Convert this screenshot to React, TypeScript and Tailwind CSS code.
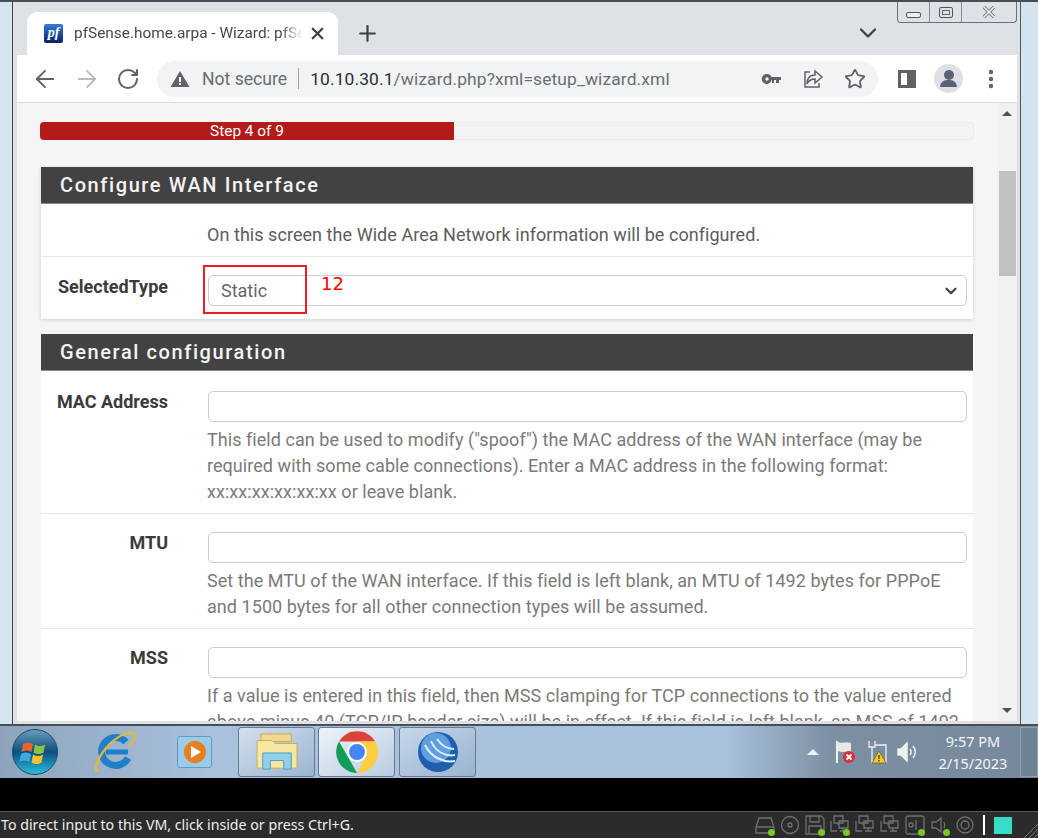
import React from "react";
import { ArrowLeft, ArrowRight, RotateCw, Plus, X, ChevronDown, Star, EllipsisVertical } from "lucide-react";

const Field: React.FC<{ label: string; labelClass: string; inputClass: string; lines: string[]; rowClass: string }> = ({
  label,
  labelClass,
  inputClass,
  lines,
  rowClass,
}) => (
  <div className={`flex border-b border-[#e6e6e6] ${rowClass}`}>
    <div className={`w-[127px] shrink-0 text-right font-bold text-[18px] leading-[24px] text-[#3a3a3a] ${labelClass}`}>
      {label}
    </div>
    <div className={`ml-[40px] w-[759px] ${inputClass}`}>
      <div className="h-[31px] rounded-[5px] border border-[#ccc] bg-white" />
      <div className="-ml-px mt-[5px] text-[18px] tracking-[0.05px] leading-[26px] text-[#7a7a7a]">
        {lines.map((l) => (
          <div key={l} className="whitespace-nowrap">
            {l}
          </div>
        ))}
      </div>
    </div>
  </div>
);

const SectionHead: React.FC<{ title: string }> = ({ title }) => (
  <div className="h-[37px] bg-[#424242] border-b border-[#888] pl-[19px] text-[20px] leading-[36px] font-medium tracking-[1.6px] text-[#f4f4f4]">
    {title}
  </div>
);

const Tray: React.FC<{ children: React.ReactNode; dot?: boolean }> = ({ children, dot }) => (
  <div className="relative w-[20px] h-[20px] mr-[5px] flex items-center justify-center">
    <svg viewBox="0 0 20 20" className="w-[20px] h-[20px]" fill="none" stroke="#707070" strokeWidth="1.3">
      {children}
    </svg>
    {dot && <span className="absolute right-0 bottom-[-1px] w-[7px] h-[7px] rounded-full bg-[#7cc42a]" />}
  </div>
);

const pcs = "M4 1h9v7H4z M8 8v2 M9 6h9v7H9z M13 13v3 M10 16h7 M1 6v10h6";

const App: React.FC = () => {
  return (
    <div className="w-[1038px] h-[838px] overflow-hidden flex flex-col bg-black font-['Roboto',sans-serif]">
      {/* desktop window */}
      <div className="h-[726px] flex bg-[#d5e4f1] shrink-0 border-t-2 border-b-2 border-[#4a4d52]">
        <div className="w-[13px] shrink-0 bg-[#d6e5f2] border-r border-[#444]" />
        <div className="relative w-[1008px] shrink-0 flex flex-col pl-[4px] pr-[3px] pb-[3px] bg-[#dee1e6] border-r border-[#555] overflow-hidden">
          {/* tab strip */}
          <div className="h-[53px] shrink-0 flex items-end pl-[10px]">
            <div className="h-[43px] w-[311px] bg-white rounded-t-[10px] flex items-center pl-[17px]">
              <div className="w-[19px] h-[19px] rounded-[2px] bg-gradient-to-b from-[#2f7fd6] to-[#101f63] text-white text-[14px] font-bold italic leading-[18px] text-center font-['Liberation_Serif',serif]">
                pf
              </div>
              <div className="ml-[11px] w-[229px] overflow-hidden whitespace-nowrap text-[15.4px] text-[#45494e] [mask-image:linear-gradient(to_right,black_90%,transparent)]">
                pfSense.home.arpa - Wizard: pfSense
              </div>
              <X size={19} strokeWidth={3} className="ml-[5px] text-[#3f4246]" />
            </div>
            <Plus size={25} strokeWidth={2.1} className="ml-[17px] mb-[9px] text-[#3c4043]" />
            <ChevronDown size={28} strokeWidth={2} className="ml-[474px] mb-[8px] text-[#3c4043]" />
          </div>
          {/* window controls */}
          <div className="absolute top-0 right-[3px] h-[21px] w-[120px] flex border border-t-0 border-[#6b6f75] rounded-b-[4px] bg-[#dee1e6]">
            <div className="w-[32px] flex items-center justify-center border-r border-[#8b8f95]">
              <div className="w-[15px] h-[6px] mt-[5px] rounded-[2px] border border-[#555] bg-[#eee]" />
            </div>
            <div className="w-[32px] flex items-center justify-center border-r border-[#8b8f95]">
              <div className="w-[14px] h-[11px] rounded-[2px] border border-[#555] flex items-center justify-center">
                <div className="w-[8px] h-[5px] border border-[#666]" />
              </div>
            </div>
            <div className="flex-1 flex items-center justify-center">
              <svg viewBox="0 0 14 12" className="w-[14px] h-[12px]">
                <path d="M2 1l10 10M12 1L2 11" stroke="#75787c" strokeWidth="3.4" />
                <path d="M2 1l10 10M12 1L2 11" stroke="#f2f3f4" strokeWidth="1.6" />
              </svg>
            </div>
          </div>
          {/* toolbar */}
          <div className="h-[48px] shrink-0 bg-white border-b border-[#dadce0] flex items-center">
            <ArrowLeft size={28} strokeWidth={1.6} className="ml-[14px] text-[#5f6368]" />
            <ArrowRight size={28} strokeWidth={1.6} className="ml-[14px] text-[#b8babc]" />
            <RotateCw size={24} strokeWidth={2} className="ml-[15px] text-[#5f6368]" />
            <div className="ml-[17px] w-[721px] h-[36px] rounded-[18px] bg-[#f1f3f4] flex items-center">
              <svg viewBox="0 0 20 18" className="ml-[13px] w-[20px] h-[18px]">
                <path d="M10 1l9.500 16H.5z" fill="#5f6368" />
                <path d="M9 7h2v5H9zM9 13h2v2H9z" fill="#fff" />
              </svg>
              <span className="ml-[12px] pt-[2px] text-[17.6px] text-[#6a6d71]">Not secure</span>
              <div className="ml-[11px] w-px h-[21px] bg-[#a0a2a5]" />
              <span className="ml-[11px] pt-[2px] text-[17.4px] tracking-[0.12px] text-[#2c2d30]">10.10.30.1</span>
              <span className="pt-[2px] text-[17.4px] tracking-[0.12px] text-[#6a6e72]">/wizard.php?xml=setup_wizard.xml</span>
              <div className="ml-auto flex items-center gap-[20px] pr-[12px]">
                <svg viewBox="0 0 22 22" className="w-[22px] h-[22px]" fill="#5f6368">
                  <path fillRule="evenodd" d="M7 6a5 5 0 0 1 4.600 3H21v3h-2v3h-3v-3h-2v3h-2v-3h-.4A5 5 0 1 1 7 6zm0 3.300a1.700 1.700 0 1 0 0 3.400 1.700 1.700 0 0 0 0-3.400z" />
                </svg>
                <svg viewBox="0 0 22 22" className="w-[22px] h-[22px]" fill="none" stroke="#5f6368" strokeWidth="1.500">
                  <path d="M8 4H3v15h14v-4" />
                  <path d="M13 3l7 6-7 6v-4c-3 0-6 1-8 5 0-6 3-9 8-9z" />
                </svg>
                <Star size={22} strokeWidth={2} className="text-[#5f6368]" />
              </div>
            </div>
            <div className="ml-[20px] w-[18px] h-[18px] border-[3px] border-[#5f6368] flex justify-end">
              <div className="w-[6px] h-full bg-[#5f6368]" />
            </div>
            <div className="ml-[18px] w-[29px] h-[29px] rounded-full bg-[#dde0e4] overflow-hidden relative">
              <div className="absolute left-[10px] top-[6px] w-[10px] h-[10px] rounded-full bg-[#5a6376]" />
              <div className="absolute left-[6px] top-[16px] w-[17px] h-[7px] rounded-t-[7px] bg-[#5a6376]" />
            </div>
            <EllipsisVertical size={24} strokeWidth={2.4} className="ml-[16px] text-[#5f6368]" />
          </div>
          {/* page */}
          <div className="relative flex-1 flex min-h-0 bg-[#f5f5f5]">
            <div className="w-[980px] shrink-0 pl-[23px] pt-[19px] overflow-hidden">
              <div className="w-[934px] h-[18px] rounded-[4px] border border-[#ececec] bg-[#f3f3f3]">
                <div className="-mt-px -ml-px w-[414px] h-[18px] rounded-l-[4px] bg-[#b31b1b] text-center text-[15.4px] leading-[18px] text-white">
                  Step 4 of 9
                </div>
              </div>
              <div className="mt-[27px] ml-px w-[932px] bg-white shadow-[0_1px_4px_rgba(0,0,0,0.15)]">
                <SectionHead title="Configure WAN Interface" />
                <div className="h-[53px] border-b border-[#e6e6e6] pl-[166px] pt-[18px] text-[18px] tracking-[0.05px] leading-[26px] text-[#5c5c5c]">
                  On this screen the Wide Area Network information will be configured.
                </div>
                <div className="h-[62px] flex">
                  <div className="w-[127px] text-right pt-[18px] font-bold text-[18px] leading-[24px] text-[#3a3a3a]">SelectedType</div>
                  <div className="ml-[40px] mt-[18px] w-[759px] h-[31px] rounded-[5px] border border-[#ccc] flex items-center pl-[12px] pr-[3px] text-[18px] text-[#666]">
                    <span className="flex-1">Static</span>
                    <ChevronDown size={24} strokeWidth={3} className="text-[#444] scale-75" />
                  </div>
                </div>
              </div>
              <div className="mt-[15px] ml-px w-[932px] bg-white">
                <SectionHead title="General configuration" />
                <Field
                  label="MAC Address"
                  labelClass="pt-[19px]"
                  inputClass="pt-[20px]"
                  rowClass="h-[143px]"
                  lines={[
                    'This field can be used to modify ("spoof") the MAC address of the WAN interface (may be',
                    "required with some cable connections). Enter a MAC address in the following format:",
                    "xx:xx:xx:xx:xx:xx or leave blank.",
                  ]}
                />
                <Field
                  label="MTU"
                  labelClass="pt-[17px]"
                  inputClass="pt-[18px]"
                  rowClass="h-[115px]"
                  lines={[
                    "Set the MTU of the WAN interface. If this field is left blank, an MTU of 1492 bytes for PPPoE",
                    "and 1500 bytes for all other connection types will be assumed.",
                  ]}
                />
                <Field
                  label="MSS"
                  labelClass="pt-[17px]"
                  inputClass="pt-[18px]"
                  rowClass="h-[115px]"
                  lines={[
                    "If a value is entered in this field, then MSS clamping for TCP connections to the value entered",
                    "above minus 40 (TCP/IP header size) will be in effect. If this field is left blank, an MSS of 1492",
                  ]}
                />
              </div>
            </div>
            {/* scrollbar */}
            <div className="w-[21px] bg-[#f1f1f1] flex flex-col items-center pt-[8px] pb-[8px]">
              <div className="w-0 h-0 border-x-[5px] border-x-transparent border-b-[5px] border-b-[#505050]" />
              <div className="mt-[55px] w-[17px] h-[105px] bg-[#c1c1c1]" />
              <div className="mt-auto w-0 h-0 border-x-[5px] border-x-transparent border-t-[5px] border-t-[#505050]" />
            </div>
            {/* annotation drawn over the screenshot */}
            <div className="absolute left-[186px] top-[162px] w-[104px] h-[49px] border-2 border-[#ee1c25]" />
            <div className="absolute left-[304px] top-[169px] text-[18px] leading-[24px] text-[#ff0000] font-['DejaVu_Sans',sans-serif]">
              12
            </div>
          </div>
        </div>
        <div className="flex-1 bg-[#d4e3f0]" />
      </div>
      {/* taskbar */}
      <div className="h-[52px] shrink-0 bg-[linear-gradient(to_right,#8da3bc,#a8c1dc_20%,#a8c1dc_70%,#7d8fa3_80%,#76899c)] flex items-center">
        <svg viewBox="0 0 46 46" className="ml-[12px] w-[46px] h-[46px]">
          <defs>
            <linearGradient id="orb" x1="0" y1="0" x2="0" y2="1">
              <stop offset="0" stopColor="#6d9cbc" />
              <stop offset="0.5" stopColor="#0c4f7e" />
              <stop offset="1" stopColor="#2bc0e0" />
            </linearGradient>
          </defs>
          <circle cx="23" cy="23" r="22.500" fill="url(#orb)" stroke="#23465c" />
          <path d="M11 15c4-2 7-2 10 0l-1.500 8c-3-2-6-2-10 0z" fill="#e8622c" />
          <path d="M23 15.500c3 2 6 2 10 0l-1.500 8c-4 2-7 2-10 0z" fill="#8cc63f" />
          <path d="M9 25c4-2 7-2 10 0l-1.500 8c-3-2-6-2-10 0z" fill="#3fa9e0" />
          <path d="M21 25.500c3 2 6 2 10 0l-1.500 8c-4 2-7 2-10 0z" fill="#f5c22c" />
        </svg>
        <svg viewBox="0 0 44 44" className="ml-[36px] w-[44px] h-[44px]">
          <path d="M32 12a14 14 0 1 0 2 16" fill="none" stroke="#1f7fc9" strokeWidth="7" />
          <path d="M12 22h22" stroke="#1f7fc9" strokeWidth="5" />
          <path d="M5 40C-1 44 2 30 12 18 22 6 38-1 41 4c2 4-3 10-6 12" fill="none" stroke="#e8b92c" strokeWidth="2.200" />
        </svg>
        <div className="ml-[39px] w-[35px] h-[32px] rounded-[3px] bg-[#9ccbe8] border border-[#5c9cc8] flex items-center justify-center">
          <div className="w-[22px] h-[22px] rounded-full bg-[#e8801f] flex items-center justify-center">
            <div className="ml-[3px] w-0 h-0 border-y-[6px] border-y-transparent border-l-[10px] border-l-white" />
          </div>
        </div>
        <div className="ml-[26px] w-[77px] h-[50px] rounded-[3px] border border-[#6a7a8c] bg-gradient-to-br from-[#d3e0ee] to-[#9ab5d2] flex items-center justify-center">
          <svg viewBox="0 0 44 40" className="w-[42px] h-[38px]">
            <rect x="5" y="1" width="32" height="8" fill="#f0d98e" stroke="#c8ab55" />
            <path d="M1 8h16l3 3h23v26H1z" fill="#f7e7a3" stroke="#c8ab55" />
            <path d="M7 38V21h30v17h-8v-9H15v9z" fill="#8fd0ea" stroke="#4e9dc2" />
          </svg>
        </div>
        <div className="ml-[3px] w-[77px] h-[50px] rounded-[3px] border border-[#6a7a8c] bg-gradient-to-br from-[#eef3f9] to-[#b8cce2] flex items-center justify-center">
          <svg viewBox="0 0 42 42" className="w-[42px] h-[42px]">
            <path d="M3 10.500A21 21 0 0 1 39.200 10.500L21 10.500Z" fill="#db4437" />
            <path d="M3 10.500L12 26 21 42A21 21 0 0 1 3 10.500Z" fill="#0f9d58" />
            <path d="M39.200 10.500A21 21 0 0 1 21 42L30 26 21 10.500Z" fill="#ffcd40" />
            <circle cx="21" cy="21" r="10" fill="#fff" />
            <circle cx="21" cy="21" r="8" fill="#4285f4" />
          </svg>
        </div>
        <div className="ml-[4px] w-[77px] h-[50px] rounded-[3px] border border-[#6a7a8c] bg-gradient-to-br from-[#c6d7e9] to-[#98b3d0] flex items-center justify-center">
          <svg viewBox="0 0 42 42" className="w-[42px] h-[42px]">
            <circle cx="21" cy="21" r="20" fill="#1f5fae" />
            <circle cx="19" cy="17" r="15" fill="#5f9fe0" />
            <path d="M8 14C14 26 26 32 38 30M14 10C18 20 28 26 38 24M20 8C24 14 30 18 37 18" fill="none" stroke="#e0eef9" strokeWidth="2" />
          </svg>
        </div>
        {/* tray */}
        <div className="ml-auto flex items-center text-white">
          <div className="w-0 h-0 border-x-[6px] border-x-transparent border-b-[6px] border-b-[#eef2f6]" />
          <svg viewBox="0 0 20 24" className="ml-[16px] w-[20px] h-[24px]">
            <path d="M1 1h2v22H1z" fill="#f0f0f0" />
            <path d="M3 2c4 2 8-1 13 1v9c-5-1-9 1-13-1z" fill="#e8e8e8" />
            <circle cx="14" cy="17" r="6" fill="#d8303a" />
            <path d="M11.500 14.500l5 5M16.500 14.500l-5 5" stroke="#fff" strokeWidth="1.800" />
          </svg>
          <svg viewBox="0 0 22 24" className="ml-[10px] w-[22px] h-[24px]" fill="none" stroke="#f0f0f0" strokeWidth="1.300">
            <path d="M4 1v6h6V1 M7 7v15h14V5H10" />
            <path d="M14 11l7 12H7z" fill="#f3c92c" stroke="#6b5a10" strokeWidth="0.700" />
            <path d="M14 15v4M14 20v1.500" stroke="#333" strokeWidth="1.200" />
          </svg>
          <svg viewBox="0 0 20 22" className="ml-[10px] w-[20px] h-[22px]" fill="none" stroke="#f0f0f0" strokeWidth="1.500">
            <path d="M1 8h3l6-6v18l-6-6H1z" fill="#f0f0f0" />
            <path d="M13 8c1.500 2 1.500 4 0 6M16 5c3 3.500 3 8.500 0 12" />
          </svg>
          <div className="ml-[20px] w-[72px] text-center text-[14.5px] leading-[22px] text-[#f3f6f9] font-['Noto_Sans',sans-serif]">
            <div>9:57 PM</div>
            <div>2/15/2023</div>
          </div>
          <div className="ml-[11px] w-[18px] h-[50px] border border-[#8fa0b0] bg-[#6f8296]" />
        </div>
      </div>
      <div className="h-[33px] shrink-0 bg-black" />
      {/* vm status bar */}
      <div className="relative h-[27px] shrink-0 border-t border-[#555] bg-[#2b2b2b] flex items-center text-[14.2px] text-[#eee] font-['Noto_Sans',sans-serif]">
        <span className="ml-px whitespace-nowrap">To direct input to this VM, click inside or press Ctrl+G.</span>
        <div className="ml-auto flex items-center mr-[26px]">
          <Tray dot><path d="M1 12l3-9h12l3 9v6H1z M1 12h18" /></Tray>
          <Tray><circle cx="10" cy="10" r="8.500" /><circle cx="10" cy="10" r="2" /></Tray>
          <Tray dot><path d="M1 1h15l3 3v15H1z M5 1v6h9V1 M4 19v-8h12v8" /></Tray>
          <Tray dot><path d={pcs} /></Tray>
          <Tray><path d={pcs} /></Tray>
          <Tray><path d={pcs} /></Tray>
          <Tray dot><rect x="1" y="1" width="18" height="18" rx="2" /><circle cx="6" cy="10" r="2" /><path d="M11 5v10" /></Tray>
          <Tray dot><path d="M2 7h4l5-4v14l-5-4H2z M14 7c1 2 1 4 0 6" /></Tray>
          <Tray><circle cx="10" cy="10" r="8" /><circle cx="10" cy="10" r="4" /></Tray>
          <div className="ml-[3px] mr-[9px] w-[2px] h-[20px] bg-white" />
          <div className="w-[18px] h-[17px] bg-[#37dcc6]" />
        </div>
        <svg viewBox="0 0 14 14" className="absolute right-0 bottom-0 w-[14px] h-[14px]" stroke="#777" strokeWidth="1">
          <path d="M0 14L14 0M5 14L14 5M10 14l4-4" />
        </svg>
      </div>
    </div>
  );
};

export default App;
